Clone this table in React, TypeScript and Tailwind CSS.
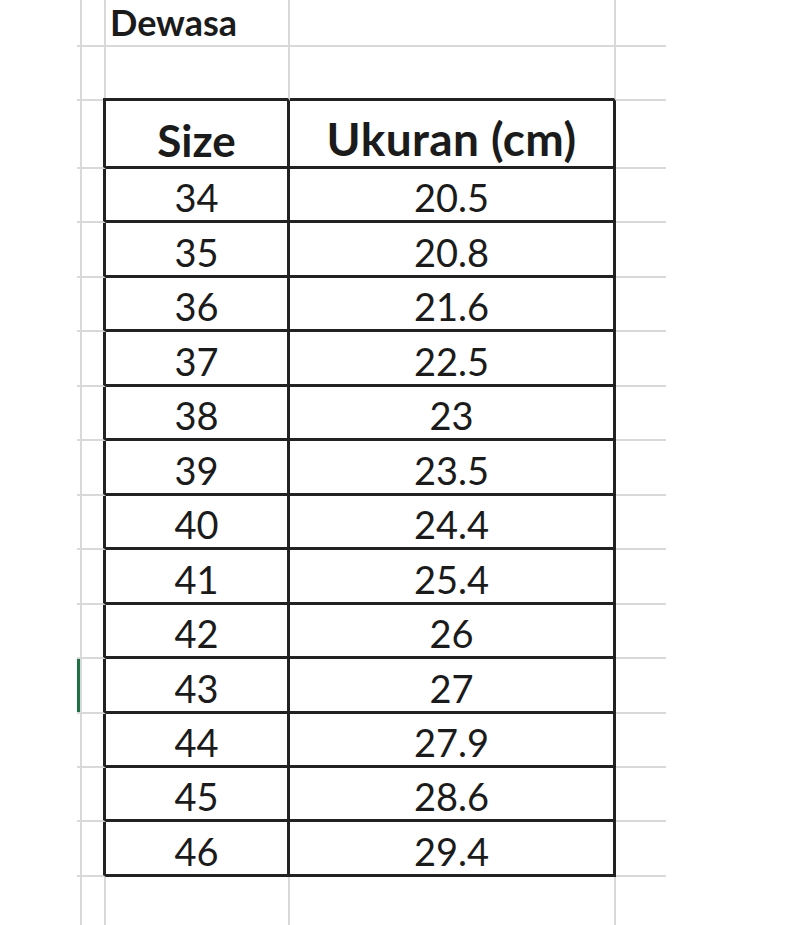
const rows: [string, string][] = [
  ["34", "20.5"],
  ["35", "20.8"],
  ["36", "21.6"],
  ["37", "22.5"],
  ["38", "23"],
  ["39", "23.5"],
  ["40", "24.4"],
  ["41", "25.4"],
  ["42", "26"],
  ["43", "27"],
  ["44", "27.9"],
  ["45", "28.6"],
  ["46", "29.4"],
];

const grid = "border-b-2 border-r-2 border-[#d9d9d9]";
// sel di dalam tabel: garis gelap kanan dan bawah
const dark = "border-b-[3px] border-r-[3px] border-[#222222]";
const leftOfTable = "border-b-2 border-r-[3px] border-b-[#d9d9d9] border-r-[#222222]";
const aboveTable = "border-b-[3px] border-r-2 border-b-[#222222] border-r-[#d9d9d9]";

export default function App() {
  return (
    <div
      className="w-[800px] h-[925px] overflow-hidden bg-white pl-[77px]"
      style={{ fontFamily: "Lato, 'Open Sans', sans-serif" }}
    >
      <div className="grid w-[589px] grid-cols-[5px_24px_184px_326px_50px] grid-rows-[47px_54px_68px_repeat(13,54.46px)_60px] text-[#1b1b1b]">
        {/* baris 1: judul */}
        <div className={grid} />
        <div className={grid} />
        <div className={`${grid} flex items-end pl-[4px] pb-[5px]`}>
          <span className="text-[36px] font-bold leading-none">Dewasa</span>
        </div>
        <div className={grid} />
        <div className="border-b-2 border-[#d9d9d9]" />

        {/* baris 2: kosong, garis atas tabel */}
        <div className={grid} />
        <div className={grid} />
        <div className={`${aboveTable} -ml-[3px]`} />
        <div className={aboveTable} />
        <div className="border-b-2 border-[#d9d9d9]" />

        {/* header tabel */}
        <div className={grid} />
        <div className={leftOfTable} />
        <div className={`${dark} flex items-end justify-center pb-[4px]`}>
          <span className="text-[44px] font-bold leading-none">Size</span>
        </div>
        <div className={`${dark} flex items-end justify-center pb-[4px]`}>
          <span className="text-[46px] font-bold leading-none tracking-[0.4px]">Ukuran (cm)</span>
        </div>
        <div className="border-b-2 border-[#d9d9d9]" />

        {rows.map(([size, cm], i) => (
          <div key={size} className="contents">
            <div className={grid}>
              {i === 9 && <div className="h-full w-[3px] bg-[#1e7145]" />}
            </div>
            <div className={leftOfTable} />
            <div className={`${dark} flex items-end justify-center pb-[4px]`}>
              <span className="text-[38px] leading-none">{size}</span>
            </div>
            <div className={`${dark} flex items-end justify-center pb-[4px]`}>
              <span className="text-[38px] leading-none">{cm}</span>
            </div>
            <div className="border-b-2 border-[#d9d9d9]" />
          </div>
        ))}

        {/* baris bawah */}
        <div className={grid} />
        <div className={grid} />
        <div className={grid} />
        <div className={grid} />
        <div className="border-b-2 border-[#d9d9d9]" />
      </div>
    </div>
  );
}
